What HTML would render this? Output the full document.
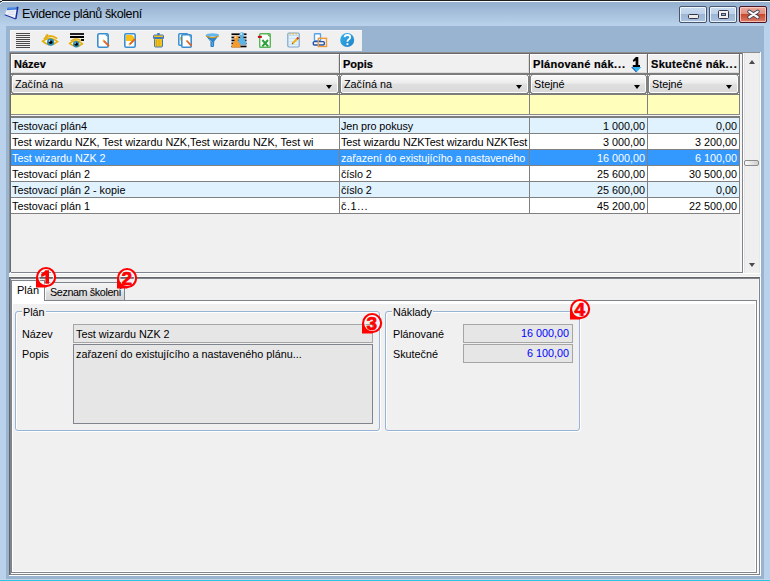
<!DOCTYPE html>
<html><head><meta charset="utf-8">
<style>
*{box-sizing:border-box}
html,body{margin:0;padding:0}
body{width:770px;height:581px;overflow:hidden;position:relative;background:#b9d1ea;font-family:"Liberation Sans",sans-serif;font-size:10.8px;color:#000}
.a{position:absolute}
.t{position:absolute;white-space:nowrap;line-height:15px}
.hd{font-weight:bold;font-size:11px;-webkit-text-stroke:0.2px #000}
.fc{border:1px solid #fdfdfd;border-radius:2px;background:linear-gradient(#f9f9f9,#ececec 45%,#e0e0e0 50%,#d9d9d9)}
.arr{position:absolute;width:0;height:0;border-left:3.6px solid transparent;border-right:3.6px solid transparent;border-top:4px solid #000}
</style></head><body>
<div class="a" style="left:0;top:0;width:770px;height:26px;background:linear-gradient(#96b1d0 2px,#9ab5d3 6px,#b9d1ea 25px)"></div>
<div class="a" style="left:0;top:0;width:770px;height:1px;background:#1d1d1d"></div>
<div class="a" style="left:0;top:1px;width:770px;height:1px;background:#fbfcfe"></div>
<div class="a" style="left:6px;top:26px;width:758px;height:553px;background:#99b4d1"></div>
<div class="a" style="left:0;top:579px;width:770px;height:1px;background:#c8d4ec"></div>
<div class="a" style="left:0;top:580px;width:770px;height:1px;background:#26c6de"></div>
<div class="t" style="left:22px;top:6px;font-size:12.5px;letter-spacing:-0.4px;line-height:16px;color:#000">Evidence plánů školení</div>

<div class="a" style="left:9px;top:52px;width:752px;height:524px;background:#f0f0f0"></div>
<div class="a" style="left:9px;top:52px;width:752px;height:1px;background:#8c8c8c"></div>
<div class="a" style="left:9px;top:52px;width:1px;height:221px;background:#8c8c8c"></div>
<div class="a" style="left:10px;top:53px;width:733px;height:1px;background:#6a6a6a"></div>
<div class="a" style="left:10px;top:53px;width:1px;height:219px;background:#6a6a6a"></div>
<div class="a" style="left:9px;top:273px;width:752px;height:1px;background:#fff"></div>
<div class="a" style="left:760px;top:52px;width:1px;height:222px;background:#fff"></div>
<div class="a" style="left:11px;top:54px;width:731px;height:19px;background:#f0f0f0;border-top:1px solid #fff;border-bottom:1px solid #dcdcdc"></div>
<div class="a" style="left:11px;top:54px;width:1px;height:19px;background:#fff"></div>
<div class="a" style="left:11px;top:73px;width:731px;height:2px;background:#7c7c7c"></div>
<div class="a" style="left:338px;top:55px;width:1px;height:18px;background:#dcdcdc"></div>
<div class="a" style="left:339px;top:54px;width:1px;height:19px;background:#6d6d6d"></div>
<div class="a" style="left:340px;top:54px;width:1px;height:19px;background:#fff"></div>
<div class="a" style="left:528px;top:55px;width:1px;height:18px;background:#dcdcdc"></div>
<div class="a" style="left:529px;top:54px;width:1px;height:19px;background:#6d6d6d"></div>
<div class="a" style="left:530px;top:54px;width:1px;height:19px;background:#fff"></div>
<div class="a" style="left:646px;top:55px;width:1px;height:18px;background:#dcdcdc"></div>
<div class="a" style="left:647px;top:54px;width:1px;height:19px;background:#6d6d6d"></div>
<div class="a" style="left:648px;top:54px;width:1px;height:19px;background:#fff"></div>
<div class="a" style="left:738px;top:55px;width:1px;height:18px;background:#dcdcdc"></div>
<div class="a" style="left:739px;top:54px;width:1px;height:19px;background:#6d6d6d"></div>
<div class="a" style="left:740px;top:54px;width:1px;height:19px;background:#fff"></div>
<div class="t hd" style="left:14px;top:57px">Název</div>
<div class="t hd" style="left:343px;top:57px">Popis</div>
<div class="t hd" style="left:533px;top:57px;letter-spacing:0.3px">Plánované nák<span style="letter-spacing:1px">...</span></div>
<div class="t hd" style="left:651px;top:57px;letter-spacing:0.3px">Skutečné nák<span style="letter-spacing:1px">...</span></div>
<div class="a" style="left:11px;top:75px;width:731px;height:18px;background:#808080"></div>
<div class="a" style="left:11px;top:93px;width:731px;height:2px;background:#7c7c7c"></div>
<div class="a fc" style="left:12px;top:75px;width:326px;height:18px"><div class="t" style="left:2px;top:1px">Začíná na</div><div class="arr" style="left:313px;top:9px"></div></div>
<div class="a fc" style="left:341px;top:75px;width:187px;height:18px"><div class="t" style="left:2px;top:1px">Začíná na</div><div class="arr" style="left:174px;top:9px"></div></div>
<div class="a fc" style="left:531px;top:75px;width:115px;height:18px"><div class="t" style="left:2px;top:1px">Stejné</div><div class="arr" style="left:102px;top:9px"></div></div>
<div class="a fc" style="left:649px;top:75px;width:89px;height:18px"><div class="t" style="left:2px;top:1px">Stejné</div><div class="arr" style="left:76px;top:9px"></div></div>
<div class="a" style="left:338px;top:75px;width:1px;height:1px;background:#f4f4f4"></div>
<div class="a" style="left:340px;top:75px;width:1px;height:1px;background:#f4f4f4"></div>
<div class="a" style="left:338px;top:93px;width:1px;height:1px;background:#f4f4f4"></div>
<div class="a" style="left:340px;top:93px;width:1px;height:1px;background:#f4f4f4"></div>
<div class="a" style="left:528px;top:75px;width:1px;height:1px;background:#f4f4f4"></div>
<div class="a" style="left:530px;top:75px;width:1px;height:1px;background:#f4f4f4"></div>
<div class="a" style="left:528px;top:93px;width:1px;height:1px;background:#f4f4f4"></div>
<div class="a" style="left:530px;top:93px;width:1px;height:1px;background:#f4f4f4"></div>
<div class="a" style="left:646px;top:75px;width:1px;height:1px;background:#f4f4f4"></div>
<div class="a" style="left:648px;top:75px;width:1px;height:1px;background:#f4f4f4"></div>
<div class="a" style="left:646px;top:93px;width:1px;height:1px;background:#f4f4f4"></div>
<div class="a" style="left:648px;top:93px;width:1px;height:1px;background:#f4f4f4"></div>
<div class="a" style="left:11px;top:75px;width:1px;height:1px;background:#f4f4f4"></div>
<div class="a" style="left:738px;top:75px;width:1px;height:1px;background:#f4f4f4"></div>
<div class="a" style="left:11px;top:93px;width:1px;height:1px;background:#f4f4f4"></div>
<div class="a" style="left:738px;top:93px;width:1px;height:1px;background:#f4f4f4"></div>
<div class="a" style="left:11px;top:95px;width:731px;height:19px;background:#ffffbb"></div>
<div class="a" style="left:339px;top:95px;width:1px;height:19px;background:#808080"></div>
<div class="a" style="left:529px;top:95px;width:1px;height:19px;background:#808080"></div>
<div class="a" style="left:647px;top:95px;width:1px;height:19px;background:#808080"></div>
<div class="a" style="left:739px;top:95px;width:1px;height:19px;background:#808080"></div>
<div class="a" style="left:11px;top:114px;width:731px;height:1px;background:#8a8a8a"></div>
<div class="a" style="left:11px;top:115px;width:731px;height:1px;background:#f4f4f4"></div>
<div class="a" style="left:11px;top:116px;width:732px;height:2px;background:#7c7c7c"></div>
<div class="a" style="left:11px;top:118px;width:731px;height:15px;background:#e1f2ff"></div>
<div class="a" style="left:11px;top:133px;width:731px;height:1px;background:#808080"></div>
<div class="t" style="left:12px;top:119px;width:326px;overflow:hidden;color:#000">Testovací plán4</div>
<div class="t" style="left:341px;top:119px;width:187px;overflow:hidden;letter-spacing:-0.08px;color:#000">Jen pro pokusy</div>
<div class="t" style="left:530px;top:119px;width:115px;text-align:right;color:#000">1 000,00</div>
<div class="t" style="left:648px;top:119px;width:89px;text-align:right;color:#000">0,00</div>
<div class="a" style="left:11px;top:134px;width:731px;height:15px;background:#ffffff"></div>
<div class="a" style="left:11px;top:149px;width:731px;height:1px;background:#808080"></div>
<div class="t" style="left:12px;top:135px;width:326px;overflow:hidden;color:#000">Test wizardu NZK, Test wizardu NZK,Test wizardu NZK, Test wi</div>
<div class="t" style="left:341px;top:135px;width:187px;overflow:hidden;letter-spacing:-0.08px;color:#000">Test wizardu NZKTest wizardu NZKTest</div>
<div class="t" style="left:530px;top:135px;width:115px;text-align:right;color:#000">3 000,00</div>
<div class="t" style="left:648px;top:135px;width:89px;text-align:right;color:#000">3 200,00</div>
<div class="a" style="left:11px;top:150px;width:731px;height:15px;background:#3399ff"></div>
<div class="a" style="left:11px;top:165px;width:731px;height:1px;background:#808080"></div>
<div class="t" style="left:12px;top:151px;width:326px;overflow:hidden;color:#fff">Test wizardu NZK 2</div>
<div class="t" style="left:341px;top:151px;width:187px;overflow:hidden;letter-spacing:-0.08px;color:#fff">zařazení do existujícího a nastaveného</div>
<div class="t" style="left:530px;top:151px;width:115px;text-align:right;color:#fff">16 000,00</div>
<div class="t" style="left:648px;top:151px;width:89px;text-align:right;color:#fff">6 100,00</div>
<div class="a" style="left:11px;top:166px;width:731px;height:15px;background:#ffffff"></div>
<div class="a" style="left:11px;top:181px;width:731px;height:1px;background:#808080"></div>
<div class="t" style="left:12px;top:167px;width:326px;overflow:hidden;color:#000">Testovací plán 2</div>
<div class="t" style="left:341px;top:167px;width:187px;overflow:hidden;letter-spacing:-0.08px;color:#000">číslo 2</div>
<div class="t" style="left:530px;top:167px;width:115px;text-align:right;color:#000">25 600,00</div>
<div class="t" style="left:648px;top:167px;width:89px;text-align:right;color:#000">30 500,00</div>
<div class="a" style="left:11px;top:182px;width:731px;height:15px;background:#e1f2ff"></div>
<div class="a" style="left:11px;top:197px;width:731px;height:1px;background:#808080"></div>
<div class="t" style="left:12px;top:183px;width:326px;overflow:hidden;color:#000">Testovací plán 2 - kopie</div>
<div class="t" style="left:341px;top:183px;width:187px;overflow:hidden;letter-spacing:-0.08px;color:#000">číslo 2</div>
<div class="t" style="left:530px;top:183px;width:115px;text-align:right;color:#000">25 600,00</div>
<div class="t" style="left:648px;top:183px;width:89px;text-align:right;color:#000">0,00</div>
<div class="a" style="left:11px;top:198px;width:731px;height:15px;background:#ffffff"></div>
<div class="a" style="left:11px;top:213px;width:731px;height:1px;background:#808080"></div>
<div class="t" style="left:12px;top:199px;width:326px;overflow:hidden;color:#000">Testovací plán 1</div>
<div class="t" style="left:341px;top:199px;width:187px;overflow:hidden;letter-spacing:-0.08px;color:#000"><span style="letter-spacing:0.6px">č.1...</span></div>
<div class="t" style="left:530px;top:199px;width:115px;text-align:right;color:#000">45 200,00</div>
<div class="t" style="left:648px;top:199px;width:89px;text-align:right;color:#000">22 500,00</div>
<div class="a" style="left:339px;top:118px;width:1px;height:96px;background:#808080"></div>
<div class="a" style="left:529px;top:118px;width:1px;height:96px;background:#808080"></div>
<div class="a" style="left:647px;top:118px;width:1px;height:96px;background:#808080"></div>
<div class="a" style="left:739px;top:118px;width:1px;height:96px;background:#808080"></div>
<div class="a" style="left:740px;top:54px;width:2px;height:218px;background:#f6f6f6"></div>
<div class="a" style="left:742px;top:53px;width:1px;height:220px;background:#80848c"></div>
<div class="a" style="left:11px;top:272px;width:731px;height:1px;background:#80848c"></div>
<div class="a" style="left:743px;top:53px;width:17px;height:220px;background:linear-gradient(90deg,#fff 0,#fff 1px,#e3e3e3 1px,#e3e3e3 2px,#efefef 2px,#efefef 16px,#e8e8e8 16px)"></div>
<div class="a" style="left:749px;top:60px;width:0;height:0;border-left:3.5px solid transparent;border-right:3.5px solid transparent;border-bottom:4px solid #4a4a4a"></div>
<div class="a" style="left:749px;top:263px;width:0;height:0;border-left:3.5px solid transparent;border-right:3.5px solid transparent;border-top:4px solid #4a4a4a"></div>
<div class="a" style="left:744px;top:160px;width:15px;height:6px;border:1px solid #8a8a8a;border-radius:2px;background:linear-gradient(90deg,#fbfbfb,#e0e0e0 60%,#cfcfcf)"></div>
<div class="a" style="left:10px;top:30px;width:352px;height:21px;background:#f0f0f0;border-top:1px solid #f8f8f8;border-left:1px solid #f8f8f8"></div>
<svg class="a" style="left:10px;top:30px" width="352" height="21" viewBox="10 30 352 21">
<!-- 1 lines -->
<g fill="#4a4a4a"><rect x="16" y="33" width="14" height="1"/><rect x="16" y="35" width="14" height="1"/><rect x="16" y="37" width="14" height="1"/><rect x="16" y="39" width="14" height="1"/><rect x="16" y="41" width="14" height="1"/><rect x="16" y="43" width="14" height="1"/><rect x="16" y="45" width="14" height="1"/><rect x="16" y="47" width="14" height="1"/></g>
<!-- 2 eye -->
<g>
<path d="M42.6,41.2 Q50,35.2 57.6,41.6 Q50,48 42.6,41.2 Z" fill="#fff" stroke="#e4b010" stroke-width="1.7"/>
<path d="M43.8,38.8 Q50,33.2 57.2,38.6" fill="none" stroke="#e4b010" stroke-width="1.8"/>
<path d="M45.6,37.4 L46.4,34.3 M47.4,36.4 L47.8,34" stroke="#d8a810" stroke-width="1"/>
<circle cx="50.6" cy="42.2" r="3.6" fill="#2a8cb8"/>
<circle cx="50.7" cy="42.2" r="1.8" fill="#000"/>
<circle cx="49.6" cy="41" r="0.8" fill="#e8f8ff"/>
</g>
<!-- 3 eye + lines -->
<g>
<rect x="70" y="33" width="14" height="2" fill="#202020"/>
<rect x="70" y="36" width="14" height="2" fill="#000"/>
<rect x="81" y="39" width="3" height="2" fill="#111"/>
<path d="M69.6,43.4 Q76,38.2 82.4,43.8 Q76,49.2 69.6,43.4 Z" fill="#fff" stroke="#e4b010" stroke-width="1.6"/>
<path d="M70.8,41.2 Q76,37.2 81,40.6" fill="none" stroke="#e4b010" stroke-width="1.6"/>
<circle cx="76.2" cy="44.2" r="3.2" fill="#2a8cb8"/>
<circle cx="76.3" cy="44.2" r="1.6" fill="#000"/>
<circle cx="75.3" cy="43.1" r="0.7" fill="#e8f8ff"/>
</g>
<!-- 4 new doc -->
<g>
<rect x="97.8" y="33.8" width="10.4" height="13.4" rx="1.5" fill="#fff" stroke="#3a8fd0" stroke-width="1.6"/>
<path d="M105,34.5 L107.5,34.5 L107.5,37 Z" fill="#3a8fd0"/>
<path d="M103.3,40.3 L109,46" stroke="#e0621e" stroke-width="1.8"/>
<path d="M102.8,39.8 L104,41" stroke="#e8c060" stroke-width="1.6"/>
</g>
<!-- 5 yellow doc -->
<g>
<rect x="124.8" y="33.8" width="10.4" height="13.4" rx="1.5" fill="#fff" stroke="#3a8fd0" stroke-width="1.6"/>
<path d="M126,35 L132,35 L134,37 L134,41 L126,41 Z" fill="#f8c018"/>
<path d="M135,39 L129.5,44.5" stroke="#e0621e" stroke-width="1.8"/>
<path d="M130,44 L128.8,45.2" stroke="#d8c070" stroke-width="1.5"/>
</g>
<!-- 6 trash -->
<g>
<rect x="157" y="33" width="3" height="2" rx="1" fill="#3f78b8"/>
<rect x="153.5" y="35" width="10" height="3.5" rx="1" fill="#f2c21c" stroke="#3f78b8" stroke-width="1"/>
<rect x="153" y="37" width="11" height="1.5" fill="#3f78b8"/>
<rect x="154.5" y="38.5" width="8" height="8.5" rx="1" fill="#f2c21c" stroke="#3f78b8" stroke-width="1"/>
<rect x="156" y="40" width="1" height="6" fill="#d8a818"/><rect x="158.5" y="40" width="1" height="6" fill="#d8a818"/>
</g>
<!-- 7 copy doc -->
<g>
<rect x="178.8" y="33.8" width="9" height="11.5" rx="1" fill="#fff" stroke="#3a8fd0" stroke-width="1.5"/>
<rect x="180" y="37" width="1" height="3.5" fill="#f5c030"/>
<rect x="181.8" y="34.8" width="9.4" height="12.4" rx="1" fill="#fff" stroke="#3a8fd0" stroke-width="1.6"/>
<path d="M188.5,35.5 L190.5,35.5 L190.5,37.5 Z" fill="#3a8fd0"/>
<path d="M186.5,40.5 L191.5,45.8" stroke="#e0621e" stroke-width="1.8"/>
</g>
<!-- 8 funnel -->
<g>
<path d="M206,35.3 Q212.5,38.6 219,35.3 L214.2,41.6 L214,46.4 Q212.4,47.6 211,46.8 L210.9,41.6 Z" fill="#2d82c8"/>
<path d="M206,35.3 L210.9,41.6 L210.9,46.8" fill="none" stroke="#1f5e98" stroke-width="0.7"/>
<ellipse cx="212.5" cy="34.9" rx="6.5" ry="1.7" fill="#62b8ee"/>
<path d="M206.2,36 Q212.5,39.2 218.8,36" fill="none" stroke="#dc9c1c" stroke-width="1.3"/>
<path d="M209.5,39.5 L212.2,42.4 L212.2,46" fill="none" stroke="#78c6f2" stroke-width="0.8"/>
</g>
<!-- 9 people list -->
<g fill="#000">
<rect x="231.5" y="33.4" width="15" height="1.7"/><rect x="231.5" y="36.6" width="15" height="1.7"/><rect x="231.5" y="39.6" width="15" height="1.7"/><rect x="231.5" y="42.6" width="15" height="1.7"/><rect x="231.5" y="45.6" width="15" height="1.7"/>
</g>
<g>
<circle cx="241.8" cy="34.6" r="2.4" fill="#5cb4e4"/>
<path d="M240.4,36.4 L243.2,36.4 L243.8,38.2 Q246.4,40.8 246.4,44.4 L237.2,44.4 Q237.2,40.8 239.8,38.2 Z" fill="#5cb4e4"/>
<circle cx="241.2" cy="34" r="0.9" fill="#d8f0ff"/>
<circle cx="236.2" cy="37.8" r="2.4" fill="#f79a2e"/>
<path d="M234.8,39.6 L237.6,39.6 L238.2,41.4 Q240.8,44 240.8,47.4 L231.6,47.4 Q231.6,44 234.2,41.4 Z" fill="#f79a2e"/>
<circle cx="235.6" cy="37.2" r="0.9" fill="#ffe4c8"/>
</g>
<!-- 10 excel -->
<g>
<rect x="259.7" y="33.7" width="10.6" height="13.6" rx="0.8" fill="#fff" stroke="#5ab45a" stroke-width="1.4"/>
<path d="M267,34.4 L269.6,34.4 L269.6,37 Z" fill="#4aa84a"/>
<rect x="257.8" y="35.8" width="4.2" height="2.2" rx="0.9" fill="#c80a14"/>
<path d="M262.3,40 L268.2,46.4 M268,40 L262.3,46.4" stroke="#2e9e3a" stroke-width="2"/>
</g>
<!-- 11 notepad -->
<g>
<rect x="287.8" y="33" width="11.4" height="14" rx="1.2" fill="#e4f2fc" stroke="#7fa4cc" stroke-width="1.2"/>
<rect x="289" y="35" width="9" height="0.8" fill="#b8d4ec"/><rect x="289" y="38" width="9" height="0.8" fill="#c8e0f4"/><rect x="289" y="41" width="9" height="0.8" fill="#c8e0f4"/><rect x="289" y="44" width="9" height="0.8" fill="#c8e0f4"/>
<rect x="289.5" y="33" width="1.5" height="1.5" fill="#e0b840"/><rect x="292.5" y="33" width="1.5" height="1.5" fill="#e0b840"/><rect x="295.5" y="33" width="1.5" height="1.5" fill="#e0b840"/>
<path d="M292.5,43.5 L297.5,38.5" stroke="#f0b010" stroke-width="2"/>
<path d="M297,39 L298.5,37.5" stroke="#c83828" stroke-width="2"/>
<path d="M292.8,43.2 L292,44" stroke="#806040" stroke-width="1.2"/>
</g>
<!-- 12 window/print -->
<g>
<rect x="314.5" y="33.8" width="6" height="7" rx="0.5" fill="#fff" stroke="#5aa2ec" stroke-width="1.4"/>
<rect x="313.3" y="41.6" width="11" height="3.4" rx="1" fill="#f0f4fa" stroke="#2450a8" stroke-width="1.4"/>
<rect x="318.3" y="38.3" width="8.2" height="8.2" fill="none" stroke="#f09a3a" stroke-width="1.4"/>
</g>
<!-- 13 help -->
<g>
<defs><linearGradient id="hg" x1="0" y1="0" x2="1" y2="1"><stop offset="0" stop-color="#34b4ec"/><stop offset="1" stop-color="#1f7fc8"/></linearGradient></defs>
<circle cx="347.2" cy="40" r="7" fill="url(#hg)"/>
<path d="M344.6,37.2 Q344.8,35 347.4,35 Q350.2,35 350.2,37.3 Q350.2,38.6 348.6,39.6 Q347.4,40.4 347.4,41.8" fill="none" stroke="#fff" stroke-width="1.8"/>
<rect x="346.5" y="43.2" width="1.9" height="1.9" fill="#fff"/>
</g>
</svg>

<div class="a" style="left:9px;top:276px;width:752px;height:1px;background:#fafafa;"></div>
<div class="a" style="left:9px;top:277px;width:751px;height:1px;background:#646464;"></div>
<div class="a" style="left:9px;top:277px;width:1px;height:298px;background:#646464;"></div>
<div class="a" style="left:10px;top:278px;width:749px;height:1px;background:#80848c;"></div>
<div class="a" style="left:10px;top:278px;width:1px;height:297px;background:#80848c;"></div>
<div class="a" style="left:759px;top:278px;width:1px;height:297px;background:#80848c;"></div>
<div class="a" style="left:10px;top:574px;width:750px;height:1px;background:#80848c;"></div>
<div class="a" style="left:760px;top:277px;width:1px;height:299px;background:#fff;"></div>
<div class="a" style="left:9px;top:575px;width:752px;height:1px;background:#fff;"></div>
<div class="a" style="left:12px;top:301px;width:744px;height:271px;background:#fff;"></div>
<div class="a" style="left:13px;top:304px;width:742px;height:267px;background:#f0f0f0;"></div>
<div class="a" style="left:11px;top:300px;width:746px;height:1px;background:#80848c;"></div>
<div class="a" style="left:11px;top:280px;width:1px;height:293px;background:#80848c;"></div>
<div class="a" style="left:756px;top:300px;width:1px;height:273px;background:#80848c;"></div>
<div class="a" style="left:11px;top:572px;width:746px;height:1px;background:#80848c;"></div>
<div class="a" style="left:757px;top:301px;width:1px;height:273px;background:#fff;"></div>
<div class="a" style="left:758px;top:279px;width:1px;height:295px;background:#f8f8f8;"></div>
<div class="a" style="left:11px;top:573px;width:747px;height:1px;background:#fff;"></div>
<div class="a" style="left:12px;top:281px;width:32px;height:23px;background:#fff;"></div>
<div class="a" style="left:11px;top:280px;width:34px;height:1px;background:#80848c;"></div>
<div class="a" style="left:44px;top:280px;width:1px;height:21px;background:#80848c;"></div>
<div class="t" style="left:17px;top:283px;font-size:11px">Plán</div>
<div class="a" style="left:45px;top:283px;width:79px;height:17px;background:linear-gradient(#f4f4f4,#ececec 45%,#dedede 55%,#d6d6d6);"></div>
<div class="a" style="left:45px;top:283px;width:1px;height:17px;background:#fafafa;"></div>
<div class="a" style="left:45px;top:282px;width:80px;height:1px;background:#80848c;"></div>
<div class="a" style="left:124px;top:282px;width:1px;height:19px;background:#80848c;"></div>
<div class="t" style="left:50px;top:285px;letter-spacing:-0.4px">Seznam školení</div>
<div class="a" style="left:16px;top:312px;width:365px;height:120px;border:1px solid #fff;border-radius:3px"></div>
<div class="a" style="left:15px;top:311px;width:365px;height:120px;border:1px solid #98b4d4;border-radius:3px"></div>
<div class="a" style="left:22px;top:309px;width:24px;height:5px;background:#f0f0f0;"></div>
<div class="t" style="left:23px;top:305px">Plán</div>
<div class="a" style="left:386px;top:312px;width:195px;height:120px;border:1px solid #fff;border-radius:3px"></div>
<div class="a" style="left:385px;top:311px;width:195px;height:120px;border:1px solid #98b4d4;border-radius:3px"></div>
<div class="a" style="left:392px;top:309px;width:41px;height:5px;background:#f0f0f0;"></div>
<div class="t" style="left:393px;top:305px">Náklady</div>
<div class="t" style="left:22px;top:327px">Název</div>
<div class="t" style="left:22px;top:347px">Popis</div>
<div class="t" style="left:393px;top:327px">Plánované</div>
<div class="t" style="left:393px;top:347px">Skutečné</div>
<div class="a" style="left:73px;top:324px;width:300px;height:19px;border:1px solid #a5a5a5;background:#e6e6e6"></div>
<div class="t" style="left:76px;top:327px;color:#000">Test wizardu NZK 2</div>
<div class="a" style="left:73px;top:344px;width:300px;height:80px;border:1px solid #80848c;background:#e6e6e6"></div>
<div class="t" style="left:76px;top:347px;color:#000">zařazení do existujícího a nastaveného plánu...</div>
<div class="a" style="left:463px;top:324px;width:110px;height:19px;border:1px solid #a5a5a5;background:#e6e6e6"></div>
<div class="t" style="left:463px;top:326px;width:106px;text-align:right;color:#0000ff">16 000,00</div>
<div class="a" style="left:463px;top:344px;width:110px;height:19px;border:1px solid #a5a5a5;background:#e6e6e6"></div>
<div class="t" style="left:463px;top:346px;width:106px;text-align:right;color:#0000ff">6 100,00</div>
<!-- window icon -->
<svg class="a" style="left:0;top:0" width="24" height="24" viewBox="0 0 24 24">
<path d="M7.4,7.8 L17.8,6.9 L15.8,19 L4.7,14.8 Z" fill="#eef0f8"/>
<path d="M7.4,7.6 L17.8,6.7 L17.4,9.4 L6.8,10.2 Z" fill="#3a78d8"/>
<path d="M8.5,8.2 L16,7.6" stroke="#7fb0f0" stroke-width="0.7"/>
<path d="M17.8,6.9 L15.8,19" stroke="#1c2c9c" stroke-width="1.5"/>
<path d="M4.7,14.8 L15.8,19" stroke="#2434a4" stroke-width="1.2"/>
<path d="M8.2,12.2 L14.5,11.6 M7.6,14.4 L14.2,14.1" stroke="#c4cce4" stroke-width="0.6"/>
<rect x="0" y="0" width="2" height="1" fill="#cfe6f6"/>
<rect x="0" y="1" width="2" height="1" fill="#333"/>
<rect x="0" y="2" width="1" height="1" fill="#888"/>
<rect x="1" y="2" width="1" height="1" fill="#eef2f8"/>
<rect x="0" y="3" width="1" height="1" fill="#dce6f2"/>
</svg>
<!-- caption buttons -->
<div class="a" style="left:679px;top:6px;width:28px;height:17px;border:1px solid #46566f;border-radius:2px;background:linear-gradient(#c9dbef 0,#bed2ea 45%,#9db6d4 50%,#aac2de 100%);box-shadow:inset 0 0 0 1px rgba(255,255,255,0.75)"></div>
<div class="a" style="left:688px;top:14px;width:11px;height:5px;border:1px solid #33364a;border-radius:1.5px;background:#ecebe8"></div>
<div class="a" style="left:709px;top:6px;width:28px;height:17px;border:1px solid #46566f;border-radius:2px;background:linear-gradient(#c9dbef 0,#bed2ea 45%,#9db6d4 50%,#aac2de 100%);box-shadow:inset 0 0 0 1px rgba(255,255,255,0.75)"></div>
<div class="a" style="left:718px;top:10px;width:11px;height:9px;border:1px solid #33364a;border-radius:1.5px;background:#f2f1ee"></div>
<div class="a" style="left:721px;top:13px;width:5px;height:3px;border:1px solid #3a4458;background:#9fb4cc"></div>
<div class="a" style="left:739px;top:6px;width:28px;height:17px;border:1px solid #4a1424;border-radius:2px;background:linear-gradient(#eba89b 0,#e19383 45%,#c84a2e 50%,#dc7c68 100%);box-shadow:inset 0 0 0 1px rgba(255,220,210,0.7)"></div>
<svg class="a" style="left:739px;top:6px" width="28" height="17" viewBox="739 6 28 17">
<path d="M749.3,11.6 L757.7,17.2 M757.7,11.6 L749.3,17.2" stroke="#3a3c50" stroke-width="4" stroke-linecap="round"/>
<path d="M749.3,11.6 L757.7,17.2 M757.7,11.6 L749.3,17.2" stroke="#f8f8f8" stroke-width="2.3" stroke-linecap="round"/>
</svg>
<!-- sort indicator -->
<svg class="a" style="left:628px;top:54px" width="18" height="20" viewBox="628 54 18 20">
<path d="M632.8,60.2 L635.9,57 L638.3,57 L638.3,65 L640,65 L640,67 L632.8,67 L632.8,65 L635.6,65 L635.6,60.4 L633.6,61.9 Z" fill="#000"/>
<path d="M631.6,67 L641.4,67 L636.5,72.3 Z" fill="#2ab4f2"/>
<path d="M631.8,67.2 L636.5,72.2" stroke="#1d2c8c" stroke-width="1"/>
</svg>
<!-- annotation markers -->
<svg class="a" style="left:36px;top:267px" width="21" height="21" viewBox="0 0 21 21">
<path d="M0,10.1 L0,20.4 L10.1,20.4 L10.1,19.2 A9.1,9.1 0 0 1 1,10.1 Z" fill="#ff0000"/>
<circle cx="10.1" cy="10.1" r="7.4" fill="none" stroke="#fff" stroke-width="1.1" opacity="0.9"/>
<circle cx="10.1" cy="10.1" r="9.05" fill="none" stroke="#ff0000" stroke-width="2.1"/>
<path d="M9.4,3.2 L13,3.2 L13,16.8 L9.4,16.8 L9.4,7.9 Q7.6,9.2 5.2,9.9 L5.2,6.8 Q8,5.8 9.4,3.2 Z" fill="#ff0000"/>
</svg>
<svg class="a" style="left:117px;top:268px" width="21" height="21" viewBox="0 0 21 21">
<path d="M0,10.1 L0,20.4 L10.1,20.4 L10.1,19.2 A9.1,9.1 0 0 1 1,10.1 Z" fill="#ff0000"/>
<circle cx="10.1" cy="10.1" r="7.4" fill="none" stroke="#fff" stroke-width="1.1" opacity="0.9"/>
<circle cx="10.1" cy="10.1" r="9.05" fill="none" stroke="#ff0000" stroke-width="2.1"/>
<text x="9.9" y="16.7" text-anchor="middle" font-family="Liberation Sans" font-weight="bold" font-size="19" fill="#ff0000" stroke="#ff0000" stroke-width="0.7" stroke-linejoin="round">2</text>
</svg>
<svg class="a" style="left:362px;top:313px" width="21" height="21" viewBox="0 0 21 21">
<path d="M0,10.1 L0,20.4 L10.1,20.4 L10.1,19.2 A9.1,9.1 0 0 1 1,10.1 Z" fill="#ff0000"/>
<circle cx="10.1" cy="10.1" r="7.4" fill="none" stroke="#fff" stroke-width="1.1" opacity="0.9"/>
<circle cx="10.1" cy="10.1" r="9.05" fill="none" stroke="#ff0000" stroke-width="2.1"/>
<text x="9.9" y="16.7" text-anchor="middle" font-family="Liberation Sans" font-weight="bold" font-size="19" fill="#ff0000" stroke="#ff0000" stroke-width="0.7" stroke-linejoin="round">3</text>
</svg>
<svg class="a" style="left:570px;top:299px" width="21" height="21" viewBox="0 0 21 21">
<path d="M0,10.1 L0,20.4 L10.1,20.4 L10.1,19.2 A9.1,9.1 0 0 1 1,10.1 Z" fill="#ff0000"/>
<circle cx="10.1" cy="10.1" r="7.4" fill="none" stroke="#fff" stroke-width="1.1" opacity="0.9"/>
<circle cx="10.1" cy="10.1" r="9.05" fill="none" stroke="#ff0000" stroke-width="2.1"/>
<text x="9.9" y="16.7" text-anchor="middle" font-family="Liberation Sans" font-weight="bold" font-size="19" fill="#ff0000" stroke="#ff0000" stroke-width="0.7" stroke-linejoin="round">4</text>
</svg>

</body></html>
